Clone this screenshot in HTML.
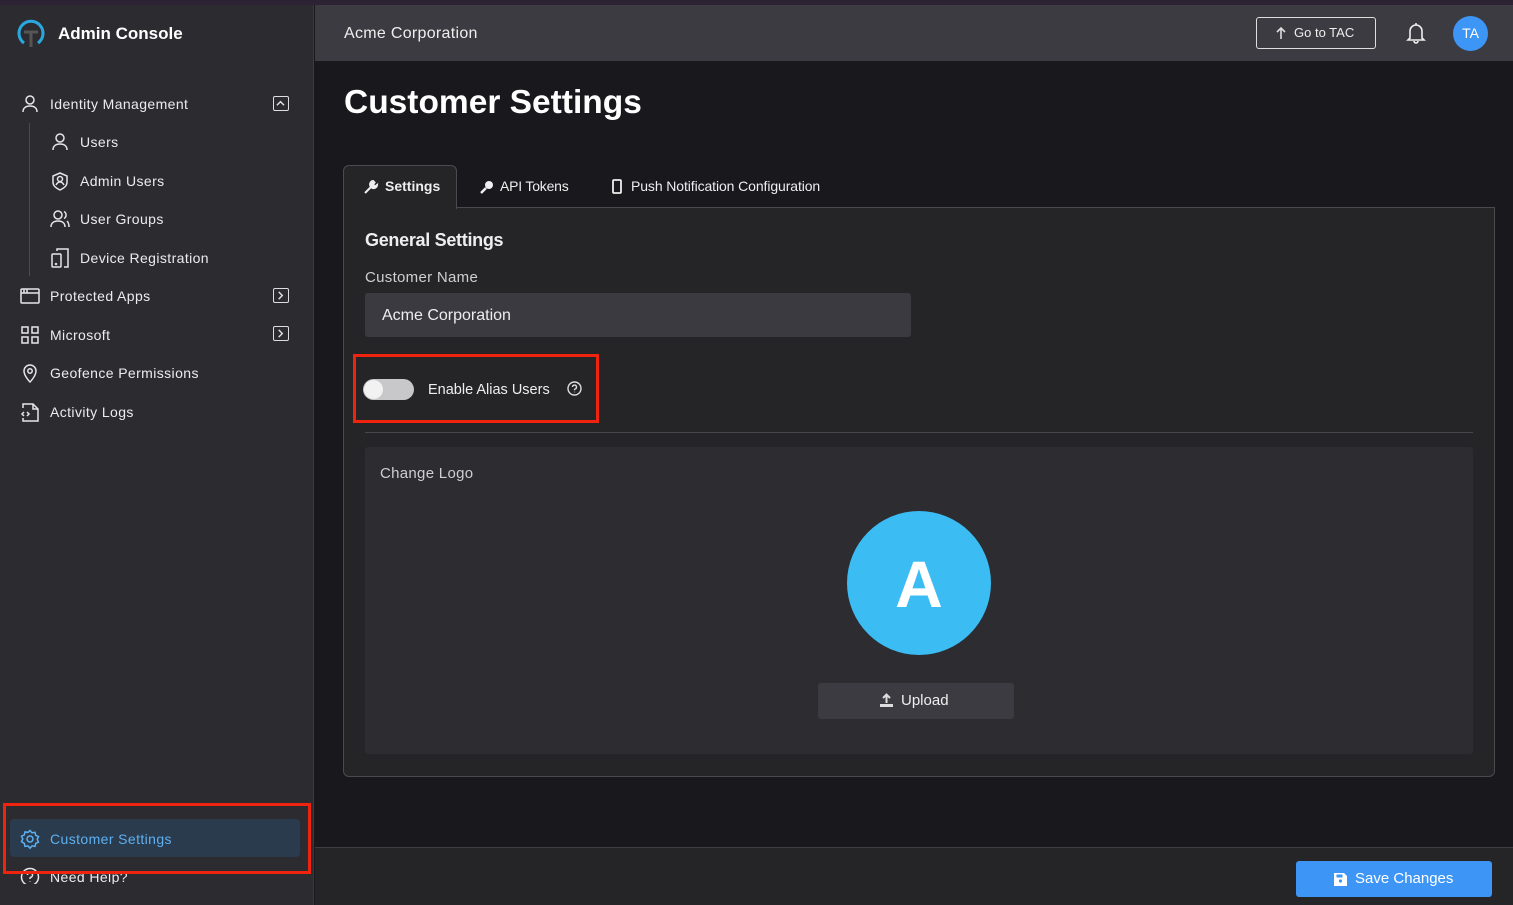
<!DOCTYPE html>
<html><head><meta charset="utf-8"><style>
*{box-sizing:border-box;margin:0;padding:0}
body{width:1513px;height:905px;overflow:hidden;background:#18181d;font-family:"Liberation Sans",sans-serif;color:#e8e8ea;position:relative}
.abs{position:absolute}
.strip{left:0;top:0;width:1513px;height:5px;background:#2d2233}
.side{left:0;top:5px;width:314px;height:900px;background:#2c2c30;border-right:1px solid #3a3a3f}
.top{left:315px;top:5px;width:1198px;height:56px;background:#3c3b42}
.nav{position:absolute;left:20px;font-size:14px;letter-spacing:0.4px;color:#ececee;display:flex;align-items:center}
.nav svg{width:20px;height:20px;margin-right:10px;fill:none;stroke:#e6e6e8;stroke-width:1.5}
.sub{left:50px}
.chev{position:absolute;left:273px;width:16px;height:15px;border:1.5px solid #ddd;border-radius:2px}
.chev svg{position:absolute;left:2px;top:2px;width:9px;height:9px;fill:none;stroke:#ddd;stroke-width:1.6}
svg{overflow:visible}
</style></head><body>
<div class="abs strip"></div>
<div class="abs side"></div>
<svg class="abs" style="left:17px;top:19px" width="28" height="30" viewBox="0 0 28 30"><path d="M7 24 A12 12 0 1 1 21 24" fill="none" stroke="#29a8e0" stroke-width="3"/><path d="M7 13h14M14 13v15" stroke="#555" stroke-width="3"/></svg>
<div class="abs" style="left:58px;top:24px;font-size:17px;font-weight:bold;color:#fff">Admin Console</div>

<div class="nav" style="top:94px"><svg viewBox="0 0 20 20"><circle cx="10" cy="6" r="4"/><path d="M3 18c0-4 3-6 7-6s7 2 7 6"/></svg>Identity Management</div>
<div class="chev" style="top:96px"><svg viewBox="0 0 10 10"><path d="M1 7l4-4 4 4"/></svg></div>
<div class="abs" style="left:29px;top:123px;width:1px;height:153px;background:#4a4a50"></div>
<div class="nav sub" style="top:132px"><svg viewBox="0 0 20 20"><circle cx="10" cy="6" r="4"/><path d="M3 18c0-4 3-6 7-6s7 2 7 6"/></svg>Users</div>
<div class="nav sub" style="top:171px"><svg viewBox="0 0 20 20"><path d="M10 2l7 3v6c0 4-3 6-7 8-4-2-7-4-7-8V5z"/><circle cx="10" cy="8" r="2.5"/><path d="M6 14c1-2 2-3 4-3s3 1 4 3"/></svg>Admin Users</div>
<div class="nav sub" style="top:209px"><svg viewBox="0 0 20 20"><circle cx="8" cy="6" r="4"/><path d="M1 18c0-4 3-6 7-6s7 2 7 6M14 2.5a4 4 0 0 1 0 7M17 12c1 1 2 3 2 6"/></svg>User Groups</div>
<div class="nav sub" style="top:248px"><svg viewBox="0 0 20 20"><rect x="2" y="6" width="9" height="13" rx="1"/><path d="M7 3V1h11v18h-4"/><circle cx="6" cy="16" r=".5"/></svg>Device Registration</div>
<div class="nav" style="top:286px"><svg viewBox="0 0 20 20"><rect x="1" y="3" width="18" height="14" rx="1"/><path d="M1 7h18M4 3v4M7 3v4"/></svg>Protected Apps</div>
<div class="chev" style="top:288px"><svg viewBox="0 0 10 10"><path d="M3 1l4 4-4 4"/></svg></div>
<div class="nav" style="top:325px"><svg viewBox="0 0 20 20"><rect x="2" y="2" width="6" height="6"/><rect x="12" y="2" width="6" height="6"/><rect x="2" y="12" width="6" height="6"/><rect x="12" y="12" width="6" height="6"/></svg>Microsoft</div>
<div class="chev" style="top:326px"><svg viewBox="0 0 10 10"><path d="M3 1l4 4-4 4"/></svg></div>
<div class="nav" style="top:363px"><svg viewBox="0 0 20 20"><path d="M10 19s-6-6-6-11a6 6 0 0 1 12 0c0 5-6 11-6 11z"/><circle cx="10" cy="8" r="2.2"/></svg>Geofence Permissions</div>
<div class="nav" style="top:402px"><svg viewBox="0 0 20 20"><path d="M3 6V2h10l5 5v12H3v-3M13 2v5h5M4 10l-2 2 2 2M7 10l2 2-2 2"/></svg>Activity Logs</div>

<div class="abs" style="left:10px;top:819px;width:290px;height:38px;background:#2a3b4e;border-radius:4px"></div>
<div class="nav" style="top:829px;color:#5eb0f0"><svg viewBox="0 0 20 20" style="stroke:#5eb0f0"><circle cx="10" cy="10" r="3"/><path d="M10 1.5l2 2.3 3-.5.7 3 2.8 1.3-1.3 2.8 1.3 2.7-2.8 1.3-.7 3-3-.5-2 2.3-2-2.3-3 .5-.7-3L1.5 12.7 2.8 10 1.5 7.2l2.8-1.3.7-3 3 .5z"/></svg>Customer Settings</div>
<div class="nav" style="top:867px;clip-path:inset(0 0 3px 0)"><svg viewBox="0 0 20 20"><circle cx="10" cy="10" r="8.5"/><path d="M7.5 8a2.5 2.5 0 1 1 3 2.4c-.5.2-.5.8-.5 1.6M10 14.5v.5"/></svg>Need Help?</div>
<div class="abs" style="left:3px;top:803px;width:308px;height:71px;border:3px solid #f0230e"></div>

<div class="abs top"></div>
<div class="abs" style="left:344px;top:25px;font-size:16px;letter-spacing:0.3px;color:#eee">Acme Corporation</div>
<div class="abs" style="left:1256px;top:17px;width:120px;height:32px;border:1px solid #ddd;border-radius:3px;font-size:13px;color:#eee;line-height:30px;padding-left:37px">Go to TAC</div>
<svg class="abs" style="left:1276px;top:27px" width="10" height="12" viewBox="0 0 10 12"><path d="M5 12V1M1 5l4-4 4 4" fill="none" stroke="#ddd" stroke-width="1.6"/></svg>
<svg class="abs" style="left:1406px;top:22px" width="20" height="22" viewBox="0 0 20 22"><path d="M4 16V9a6 6 0 0 1 12 0v7l2 2H2zM8 19a2 2 0 0 0 4 0M10 1v2" fill="none" stroke="#eee" stroke-width="1.6"/></svg>
<div class="abs" style="left:1453px;top:16px;width:35px;height:35px;border-radius:50%;background:#3d95f5;font-size:14px;line-height:35px;text-align:center;color:#fff">TA</div>

<div class="abs" style="left:344px;top:84px;font-size:33.5px;font-weight:bold;color:#fff">Customer Settings</div>

<div class="abs" style="left:343px;top:207px;width:1152px;height:570px;background:#252528;border:1px solid #4a4a50;border-radius:0 0 6px 6px"></div>
<div class="abs" style="left:343px;top:165px;width:114px;height:44px;background:#252528;border:1px solid #4a4a50;border-bottom:none;border-radius:6px 6px 0 0"></div>
<svg class="abs" style="left:364px;top:180px" width="14" height="14" viewBox="0 0 14 14"><path d="M1 13l6-6M9 1a3.5 3.5 0 0 0-2.5 5l2 2A3.5 3.5 0 0 0 13 5l-2 1.5-2-2L10.5 2.5z" stroke="#eee" stroke-width="2" fill="#eee"/></svg>
<div class="abs" style="left:385px;top:178px;font-size:14px;color:#eee;font-weight:bold">Settings</div>
<svg class="abs" style="left:480px;top:180px" width="14" height="14" viewBox="0 0 14 14"><circle cx="9" cy="5" r="4" fill="#eee"/><path d="M6 8L1 13" stroke="#eee" stroke-width="2.5"/></svg>
<div class="abs" style="left:500px;top:178px;font-size:14px;color:#eee;letter-spacing:-0.2px">API Tokens</div>
<svg class="abs" style="left:612px;top:179px" width="10" height="15" viewBox="0 0 10 15"><rect x="1" y="1" width="8" height="13" rx="1" fill="none" stroke="#eee" stroke-width="1.8"/></svg>
<div class="abs" style="left:631px;top:178px;font-size:14px;color:#eee;letter-spacing:-0.1px">Push Notification Configuration</div>

<div class="abs" style="left:365px;top:230px;font-size:18px;font-weight:bold;color:#eee;letter-spacing:-0.3px">General Settings</div>
<div class="abs" style="left:365px;top:269px;font-size:15px;color:#cfcfd2;letter-spacing:0.3px">Customer Name</div>
<div class="abs" style="left:365px;top:293px;width:546px;height:44px;background:#3a3a40;border-radius:3px;font-size:16px;line-height:46px;padding-left:17px;color:#eee">Acme Corporation</div>

<div class="abs" style="left:363px;top:379px;width:51px;height:21px;border-radius:11px;background:#c8c8ca"></div>
<div class="abs" style="left:364px;top:380px;width:19px;height:19px;border-radius:50%;background:#f2f2f2"></div>
<div class="abs" style="left:428px;top:382px;font-size:14.5px;color:#eee">Enable Alias Users</div>
<svg class="abs" style="left:567px;top:381px" width="15" height="15" viewBox="0 0 15 15"><circle cx="7.5" cy="7.5" r="6.5" fill="none" stroke="#ddd" stroke-width="1.4"/><path d="M5.5 6a2 2 0 1 1 2.5 2c-.4.1-.5.5-.5 1.2M7.5 10.8v.5" fill="none" stroke="#ddd" stroke-width="1.4"/></svg>
<div class="abs" style="left:353px;top:354px;width:246px;height:69px;border:3px solid #f0230e"></div>
<div class="abs" style="left:365px;top:432px;width:1108px;height:1px;background:#47474c"></div>

<div class="abs" style="left:365px;top:447px;width:1108px;height:307px;background:#2c2c31;border-radius:3px"></div>
<div class="abs" style="left:380px;top:465px;font-size:15px;color:#cfcfd2;letter-spacing:0.3px">Change Logo</div>
<div class="abs" style="left:847px;top:511px;width:144px;height:144px;border-radius:50%;background:#3bbcf2;color:#fff;font-size:66px;font-weight:bold;text-align:center;line-height:146px">A</div>
<div class="abs" style="left:818px;top:683px;width:196px;height:36px;background:#3c3b42;border-radius:3px;font-size:15px;color:#eee;line-height:36px;padding-left:83px">Upload</div>
<svg class="abs" style="left:879px;top:693px" width="15" height="15" viewBox="0 0 15 15"><path d="M7.5 10V2M4 5l3.5-3.5L11 5" fill="none" stroke="#ddd" stroke-width="2"/><rect x="1" y="11" width="13" height="3" fill="#ddd"/></svg>

<div class="abs" style="left:315px;top:847px;width:1198px;height:58px;background:#252528;border-top:1px solid #3e3e44"></div>
<div class="abs" style="left:1296px;top:861px;width:196px;height:36px;background:#3d95f5;border-radius:3px;font-size:15px;color:#fff;line-height:36px;padding-left:59px">Save Changes</div>
<svg class="abs" style="left:1334px;top:872px" width="13" height="14" viewBox="0 0 13 14"><path d="M0 1h10l3 3v10H0z" fill="#fff"/><circle cx="6.5" cy="9" r="1.6" fill="#3d95f5"/><rect x="2.5" y="2.5" width="6" height="3" fill="#3d95f5"/></svg>
</body></html>
